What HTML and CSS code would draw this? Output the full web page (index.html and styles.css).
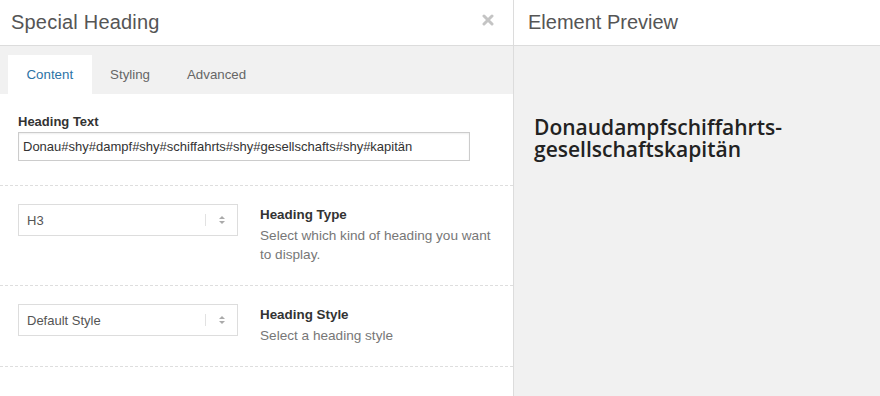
FILE: index.html
```html
<!DOCTYPE html>
<html lang="de">
<head>
  <meta charset="UTF-8">
  <title>Special Heading</title>
  <link rel="stylesheet" href="styles.css">
</head>
<body>
  <div class="editor">
    <div class="panel">
      <header class="panel-head">
        <h1>Special Heading</h1>
        <span class="close">
          <svg width="12" height="12" viewBox="0 0 12 12"><path d="M2 2 L10 10 M10 2 L2 10" stroke="#c4c4c4" stroke-width="3" stroke-linecap="round"/></svg>
        </span>
      </header>

      <nav class="tabs">
        <a class="tab active">Content</a>
        <a class="tab">Styling</a>
        <a class="tab">Advanced</a>
      </nav>

      <div class="field">
        <label class="field-label">Heading Text</label>
        <input class="text-input" type="text" value="Donau#shy#dampf#shy#schiffahrts#shy#gesellschafts#shy#kapitän">
      </div>

      <div class="field row">
        <div class="select">
          <span>H3</span>
          <span class="select-arrows"><i class="up"></i><i class="down"></i></span>
        </div>
        <div class="help">
          <div class="help-title">Heading Type</div>
          <div class="help-text">Select which kind of heading you want to display.</div>
        </div>
      </div>

      <div class="field row">
        <div class="select">
          <span>Default Style</span>
          <span class="select-arrows"><i class="up"></i><i class="down"></i></span>
        </div>
        <div class="help">
          <div class="help-title">Heading Style</div>
          <div class="help-text">Select a heading style</div>
        </div>
      </div>
    </div>

    <div class="preview">
      <header class="preview-head">
        <h2>Element Preview</h2>
      </header>
      <div class="preview-body">
        <h3>Donau&shy;dampf&shy;schiffahrts&shy;gesellschafts&shy;kapitän</h3>
      </div>
    </div>
  </div>
</body>
</html>
```

FILE: styles.css
```css
body {
  margin: 0;
  font-family: "Liberation Sans", Arial, sans-serif;
  font-size: 13px;
  color: #333;
  background-color: #fff;
}
.editor {
  display: flex;
  height: 396px;
  overflow: hidden;
}
.panel {
  width: 513px;
  flex-shrink: 0;
  border-right: 1px solid #dcdcdc;
  background-color: #fff;
}
.panel-head, .preview-head {
  height: 45px;
  border-bottom: 1px solid #dcdcdc;
  display: flex;
  align-items: center;
  background-color: #fff;
}
.panel-head {
  justify-content: space-between;
  padding: 0 19px 0 11px;
}
.panel-head h1, .preview-head h2 {
  margin: 0;
  font-size: 20px;
  font-weight: normal;
  color: #555;
}
.panel-head h1 {
  letter-spacing: 0.2px;
}
.close {
  display: flex;
  margin-top: -5px;
}
.tabs {
  display: flex;
  height: 39px;
  padding: 9px 0 0 8px;
  background-color: #f1f1f1;
}
.tab {
  display: flex;
  align-items: center;
  padding: 0 18.5px;
  color: #666;
  font-size: 13.3px;
}
.tab.active {
  background-color: #fff;
  color: #2b73a6;
}
.field {
  padding: 20px 18px 24px;
  border-bottom: 1px dashed #dedede;
}
.field-label {
  display: block;
  font-weight: bold;
  line-height: 16px;
  margin-bottom: 2px;
  color: #333;
}
.text-input {
  display: block;
  box-sizing: border-box;
  width: 452px;
  height: 29px;
  margin: 0;
  padding: 0 4px;
  border: 1px solid #ccc;
  box-shadow: inset 0 1px 2px rgba(0, 0, 0, 0.07);
  font-family: inherit;
  font-size: 13px;
  color: #333;
}
.field.row {
  display: flex;
  gap: 22px;
  padding: 18px 18px 21px;
}
.select {
  box-sizing: border-box;
  width: 220px;
  height: 32px;
  flex-shrink: 0;
  border: 1px solid #ddd;
  display: flex;
  align-items: center;
  justify-content: space-between;
  padding-left: 8px;
  color: #555;
}
.select-arrows {
  display: flex;
  flex-direction: column;
  gap: 2px;
  border-left: 1px solid #e2e2e2;
  height: 12px;
  padding: 0 12px 0 13px;
  justify-content: center;
}
.select-arrows i {
  display: block;
  width: 0;
  height: 0;
  border-left: 3px solid transparent;
  border-right: 3px solid transparent;
}
.select-arrows .up { border-bottom: 3px solid #aaa; }
.select-arrows .down { border-top: 3px solid #aaa; }
.help {
  padding-top: 1px;
}
.help-title {
  font-weight: bold;
  font-size: 13.4px;
  line-height: 19px;
  margin-bottom: 2px;
  color: #333;
}
.help-text {
  font-size: 13.6px;
  line-height: 19px;
  color: #777;
}
.preview {
  flex: 1;
  background-color: #f1f1f1;
}
.preview-head {
  padding-left: 14px;
}
.preview-body {
  padding: 70px 20px 0;
}
.preview-body h3 {
  margin: 0;
  font-family: "Open Sans", sans-serif;
  font-weight: 600;
  font-size: 21px;
  line-height: 22px;
  color: #222;
  hyphens: manual;
}
```
